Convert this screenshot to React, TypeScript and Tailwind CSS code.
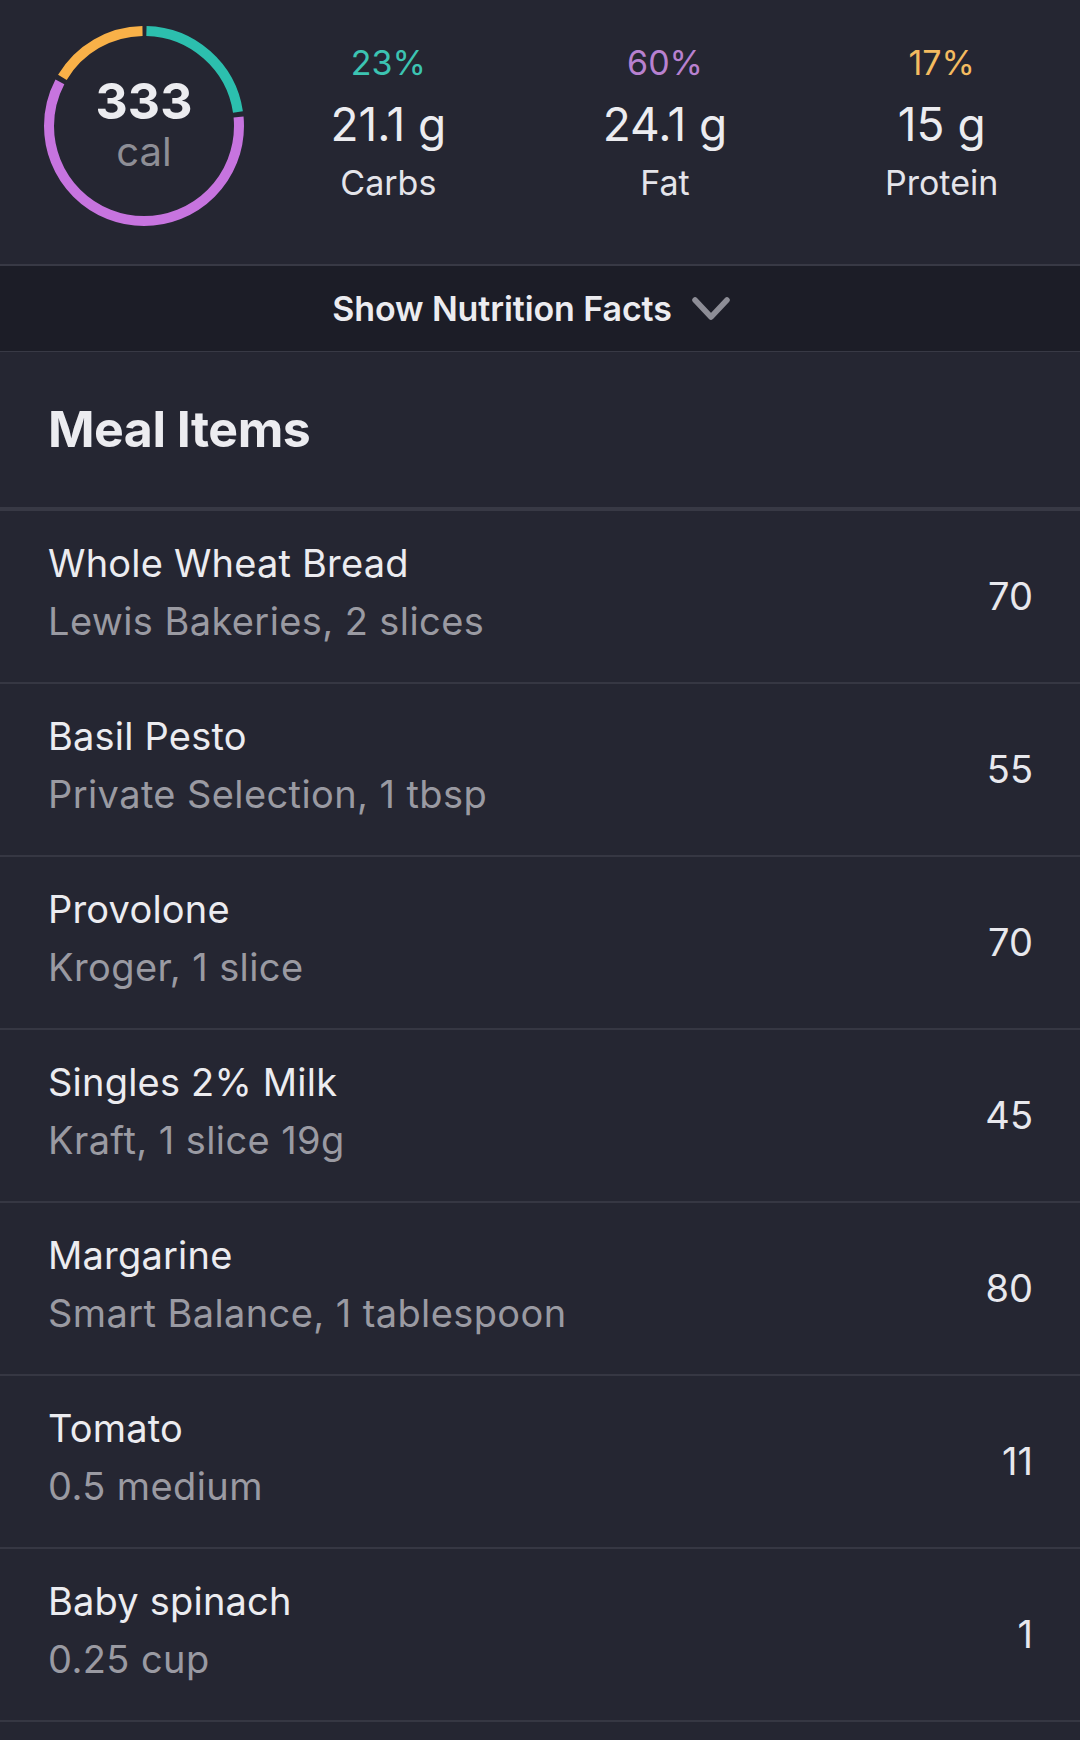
import React from "react";

const C = 2 * Math.PI * 95;

function Ring() {
  const segs = [
    { start: 0, pct: 0.23, color: "#2cbfae" },
    { start: 0.23, pct: 0.6, color: "#c774df" },
    { start: 0.83, pct: 0.17, color: "#f9b148" },
  ];
  const gap = 5;
  return (
    <div className="relative w-[200px] h-[200px]">
      <svg width="200" height="200" viewBox="0 0 200 200" className="absolute inset-0">
        {segs.map((s, i) => (
          <circle
            key={i}
            cx="100"
            cy="100"
            r="95"
            fill="none"
            stroke={s.color}
            strokeWidth="10"
            strokeDasharray={`${s.pct * C - gap} ${C}`}
            strokeDashoffset={-(s.start * C + gap / 2)}
            transform="rotate(-90 100 100)"
          />
        ))}
      </svg>
      <div className="absolute inset-0 flex flex-col items-center pt-[50px]">
        <div className="text-[50px] leading-[50px] font-bold text-[#ececf0]">333</div>
        <div className="text-[40px] leading-[44px] text-[#8e8e96] mt-[4px]">cal</div>
      </div>
    </div>
  );
}

function Macro({ pct, pctColor, grams, label }: { pct: string; pctColor: string; grams: string; label: string }) {
  return (
    <div className="flex-1 flex flex-col items-center pt-[43px]">
      <div className={`text-[34px] leading-[40px] ${pctColor}`}>{pct}</div>
      <div className="text-[46px] leading-[56px] mt-[13px] text-[#ececf0]">{grams}</div>
      <div className="text-[34px] leading-[44px] mt-[9px] text-[#e4e4ea]">{label}</div>
    </div>
  );
}

const items = [
  { name: "Whole Wheat Bread", sub: "Lewis Bakeries, 2 slices", cal: "70" },
  { name: "Basil Pesto", sub: "Private Selection, 1 tbsp", cal: "55" },
  { name: "Provolone", sub: "Kroger, 1 slice", cal: "70" },
  { name: "Singles 2% Milk", sub: "Kraft, 1 slice 19g", cal: "45" },
  { name: "Margarine", sub: "Smart Balance, 1 tablespoon", cal: "80" },
  { name: "Tomato", sub: "0.5 medium", cal: "11" },
  { name: "Baby spinach", sub: "0.25 cup", cal: "1" },
];

export default function App() {
  return (
    <div
      className="w-[1080px] h-[1740px] bg-[#252632] overflow-hidden"
      style={{ fontFamily: "Inter, 'Noto Sans', sans-serif" }}
    >
      <div className="h-[264px] flex items-start">
        <div className="w-[250px] pl-[44px] pt-[26px] shrink-0">
          <Ring />
        </div>
        <div className="flex-1 flex">
          <Macro pct="23%" pctColor="text-[#3cc4b2]" grams="21.1 g" label="Carbs" />
          <Macro pct="60%" pctColor="text-[#b881d0]" grams="24.1 g" label="Fat" />
          <Macro pct="17%" pctColor="text-[#f4bb60]" grams="15 g" label="Protein" />
        </div>
      </div>
      <div className="h-[88px] border-t-2 border-b border-[#383945] bg-[#1c1d27] flex items-center justify-center gap-[20px] pr-[18px]">
        <span className="text-[34px] font-semibold text-[#ececf0] tracking-[-0.1px]">Show Nutrition Facts</span>
        <svg width="38" height="24" viewBox="0 0 38 24">
          <polyline points="3,3 19,20 35,3" fill="none" stroke="#8d8d96" strokeWidth="5.5" strokeLinecap="round" strokeLinejoin="round" />
        </svg>
      </div>
      <div className="h-[159px] border-b-[4px] border-[#383945] flex items-center pl-[48px]">
        <h2 className="text-[50px] font-bold text-[#ececf0] tracking-[-0.5px]">Meal Items</h2>
      </div>
      {items.map((it, i) => (
        <div key={i} className="h-[173px] border-b-2 border-[#363743] flex items-center pl-[48px] pr-[47px]">
          <div className="flex-1 flex flex-col pb-[10px]">
            <div className="text-[38px] leading-[48px] text-[#ececf0] tracking-[0.2px]">{it.name}</div>
            <div className="text-[38px] leading-[48px] mt-[10px] text-[#9a9aa2] tracking-[0.4px]">{it.sub}</div>
          </div>
          <div className="text-[38px] text-[#e8e8ed]">{it.cal}</div>
        </div>
      ))}
    </div>
  );
}
